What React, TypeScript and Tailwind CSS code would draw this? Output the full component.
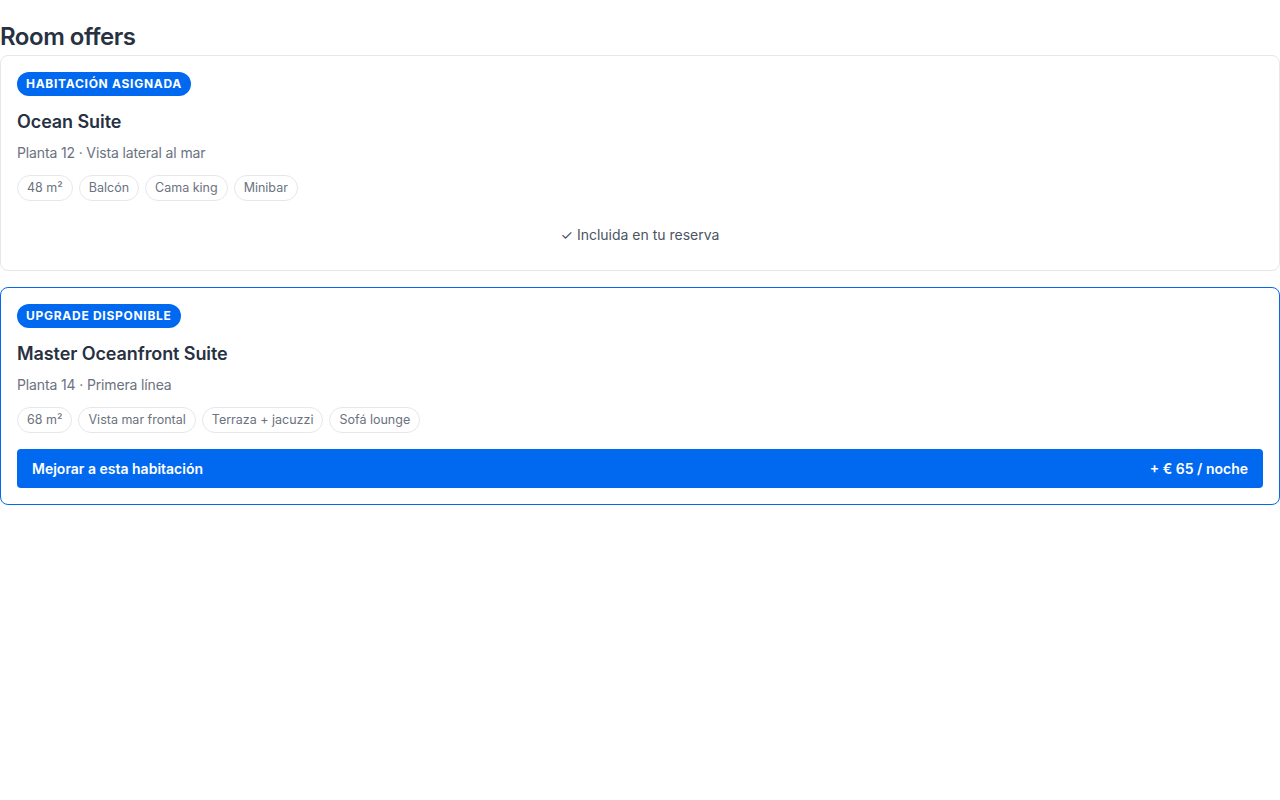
import React from "react";

interface Room {
  badge: string;
  name: string;
  detail: string;
  tags: string[];
  upgrade?: { label: string; price: string };
}

const rooms: Room[] = [
  {
    badge: "Habitación asignada",
    name: "Ocean Suite",
    detail: "Planta 12 · Vista lateral al mar",
    tags: ["48 m²", "Balcón", "Cama king", "Minibar"],
  },
  {
    badge: "Upgrade disponible",
    name: "Master Oceanfront Suite",
    detail: "Planta 14 · Primera línea",
    tags: ["68 m²", "Vista mar frontal", "Terraza + jacuzzi", "Sofá lounge"],
    upgrade: { label: "Mejorar a esta habitación", price: "+ € 65 / noche" },
  },
];

const RoomCard: React.FC<{ room: Room }> = ({ room }) => (
  <div
    className={`rounded-lg border bg-white p-4 ${
      room.upgrade ? "border-[#0069f0]" : "border-[#e5e7eb]"
    }`}
  >
    {/* badge */}
    <div className="flex">
      <span className="flex h-6 items-center rounded-full bg-[#0069f0] px-[9px] text-xs font-bold uppercase tracking-[0.06em] text-white">
        {room.badge}
      </span>
    </div>
    <h3 className="mt-3 text-lg leading-7 font-semibold tracking-[-0.005em] text-[#273142]">
      {room.name}
    </h3>
    <p className="mt-[7px] text-sm leading-5 tracking-[-0.01em] text-[#6b7280]">
      {room.detail}
    </p>
    <div className="mt-3 flex flex-wrap gap-1.5">
      {room.tags.map((t) => (
        <span
          key={t}
          className="flex h-[26px] items-center rounded-full border border-[#e5e7eb] px-[9px] text-[12.5px] text-[#6b7280]"
        >
          {t}
        </span>
      ))}
    </div>
    {room.upgrade ? (
      <button className="mt-4 flex h-[39px] w-full items-center justify-between rounded bg-[#0069f0] px-[15px] text-sm font-semibold text-white">
        <span>{room.upgrade.label}</span>
        <span>{room.upgrade.price}</span>
      </button>
    ) : (
      <p className="mt-4 pt-2 pb-[9px] text-center text-sm leading-5 text-[#4b5563]">
        ✓ Incluida en tu reserva
      </p>
    )}
  </div>
);

export default function App() {
  return (
    <div className="min-h-screen bg-white font-['Inter',sans-serif]">
      <h2 className="pt-[19px] text-2xl leading-9 font-semibold tracking-[-0.02em] text-[#273142]">
        Room offers
      </h2>
      <div className="flex flex-col gap-4">
        {rooms.map((r) => (
          <RoomCard key={r.name} room={r} />
        ))}
      </div>
    </div>
  );
}
